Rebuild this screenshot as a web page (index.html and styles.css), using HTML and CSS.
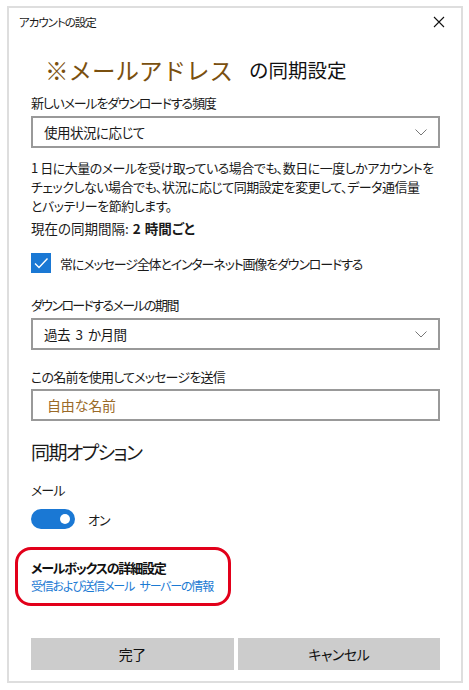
FILE: index.html
```html
<!DOCTYPE html>
<html lang="ja">
<head>
<meta charset="utf-8">
<link rel="stylesheet" href="styles.css">
</head>
<body>
<div class="dialog">
  <div class="titlebar">
    <span class="title">アカウントの設定</span>
    <svg class="close" width="12" height="12" viewBox="0 0 12 12"><path d="M1 1L11 11M11 1L1 11" stroke="#111" stroke-width="1.1" fill="none"/></svg>
  </div>
  <div class="content">
    <h1 class="heading"><span class="addr">※メールアドレス</span><span class="sync">の同期設定</span></h1>

    <div class="label l1">新しいメールをダウンロードする頻度</div>
    <div class="select"><span>使用状況に応じて</span><svg class="chev" width="12" height="7" viewBox="0 0 12 7"><path d="M0.5 0.5L6 6L11.5 0.5" stroke="#777" stroke-width="1" fill="none"/></svg></div>

    <p class="desc">1 日に大量のメールを受け取っている場合でも、数日に一度しかアカウントを<br>チェックしない場合でも、状況に応じて同期設定を変更して、データ通信量<br>とバッテリーを節約します。</p>
    <div class="interval">現在の同期間隔: <b>2 時間ごと</b></div>

    <div class="check-row">
      <span class="checkbox"><svg width="20" height="20" viewBox="0 0 20 20"><path d="M4 10.5L8 14.5L16.5 5.5" stroke="#fff" stroke-width="1.4" fill="none"/></svg></span>
      <span class="check-text">常にメッセージ全体とインターネット画像をダウンロードする</span>
    </div>

    <div class="label l2">ダウンロードするメールの期間</div>
    <div class="select"><span>過去 3 か月間</span><svg class="chev" width="12" height="7" viewBox="0 0 12 7"><path d="M0.5 0.5L6 6L11.5 0.5" stroke="#777" stroke-width="1" fill="none"/></svg></div>

    <div class="label l3">この名前を使用してメッセージを送信</div>
    <div class="input"><span class="placeholder">自由な名前</span></div>

    <h2 class="section">同期オプション</h2>
    <div class="label l4">メール</div>
    <div class="toggle-row">
      <span class="toggle"><span class="knob"></span></span>
      <span>オン</span>
    </div>

    <div class="mailbox">
      <div class="mb-title">メールボックスの詳細設定</div>
      <div class="mb-link">受信および送信メール サーバーの情報</div>
    </div>

    <div class="buttons">
      <button class="btn">完了</button>
      <button class="btn">キャンセル</button>
    </div>
  </div>
</div>
</body>
</html>
```
FILE: styles.css
```css
* { box-sizing: border-box; }
html, body { margin: 0; padding: 0; background: #fff; }
body {
  font-family: "Noto Sans CJK JP", "Noto Sans", sans-serif;
  color: #1a1a1a;
  font-size: 13px;
  letter-spacing: -0.9px;
  font-feature-settings: "palt";
}
.dialog {
  margin: 6px 0 0 7px;
  width: 456px;
  height: 677px;
  border: 2px solid #dedede;
  display: flex;
  flex-direction: column;
}
.titlebar {
  height: 28px;
  display: flex;
  align-items: center;
  justify-content: space-between;
  padding: 0 16px 0 10px;
}
.title { font-size: 11.5px; line-height: 28px; letter-spacing: -1px; }
.close { display: block; }
.content {
  padding: 0 21px 0 22px;
  display: flex;
  flex-direction: column;
}
.heading {
  margin: 19px 0 0 14px;
  height: 30px;
  display: flex;
  align-items: center;
  font-weight: normal;
  letter-spacing: 0;
}
.addr {
  font-size: 23.5px;
  color: #7a500f;
  font-feature-settings: normal;
  line-height: 30px;
}
.sync {
  font-size: 19.5px;
  margin-left: 16px;
  color: #111;
  font-feature-settings: normal;
  line-height: 30px;
}
.label { line-height: 20px; }
.l1 { margin-top: 8px; letter-spacing: -1.2px; }
.l2 { margin-top: 22px; letter-spacing: -1.6px; }
.l3 { margin-top: 17px; letter-spacing: -0.8px; }
.l4 { margin-top: 14px; }
.select, .input {
  height: 32px;
  border: 2px solid #999;
  display: flex;
  align-items: center;
  justify-content: space-between;
  padding: 0 11px 0 11px;
  margin-top: 3px;
  font-size: 13.5px;
  letter-spacing: -0.5px;
  word-spacing: 3px;
}
.input { margin-top: 2px; padding-left: 14px; font-size: 14px; letter-spacing: -0.2px; }
.placeholder { color: #9a6a28; }
.chev { display: block; }
.desc {
  margin: 10px 0 0 0;
  line-height: 19px;
  white-space: nowrap;
  letter-spacing: -0.5px;
}
.interval { margin-top: 3px; line-height: 20px; letter-spacing: 0; font-size: 13.5px; word-spacing: 1px; }
.interval b { font-weight: bold; }
.check-row {
  margin-top: 15px;
  height: 20px;
  display: flex;
  align-items: center;
  gap: 9px;
}
.check-text { letter-spacing: -1.15px; }
.checkbox {
  width: 20px; height: 20px;
  background: #1a78d4;
  display: block;
}
.checkbox svg { display: block; }
.section {
  margin: 17px 0 0 0;
  font-size: 19px;
  font-weight: normal;
  line-height: 28px;
  letter-spacing: -1.6px;
}
.toggle-row {
  margin-top: 9px;
  height: 20px;
  display: flex;
  align-items: center;
  gap: 13px;
}
.toggle {
  width: 44px; height: 20px;
  border-radius: 10px;
  background: #1a78d4;
  position: relative;
  display: block;
}
.knob {
  position: absolute;
  right: 5px; top: 5px;
  width: 10px; height: 10px;
  border-radius: 50%;
  background: #fff;
}
.mailbox {
  margin: 18px 0 0 -16px;
  width: 216px;
  height: 59px;
  border: 3px solid #e2001a;
  border-radius: 16px;
  padding: 9px 0 0 13px;
  font-size: 12.5px;
  white-space: nowrap;
}
.mb-title { font-weight: bold; line-height: 18px; color: #111; letter-spacing: -1.2px; font-size: 13px; }
.mb-link { color: #1b7ad3; line-height: 18px; font-size: 12px; letter-spacing: -1.2px; word-spacing: 4px; }
.buttons {
  margin-top: 32px;
  display: flex;
  gap: 4px;
}
.btn {
  flex: 1;
  height: 32px;
  border: none;
  background: #cccccc;
  font-family: inherit;
  font-size: 14px;
  letter-spacing: -0.5px;
  color: #111;
  font-feature-settings: "palt";
}
```
